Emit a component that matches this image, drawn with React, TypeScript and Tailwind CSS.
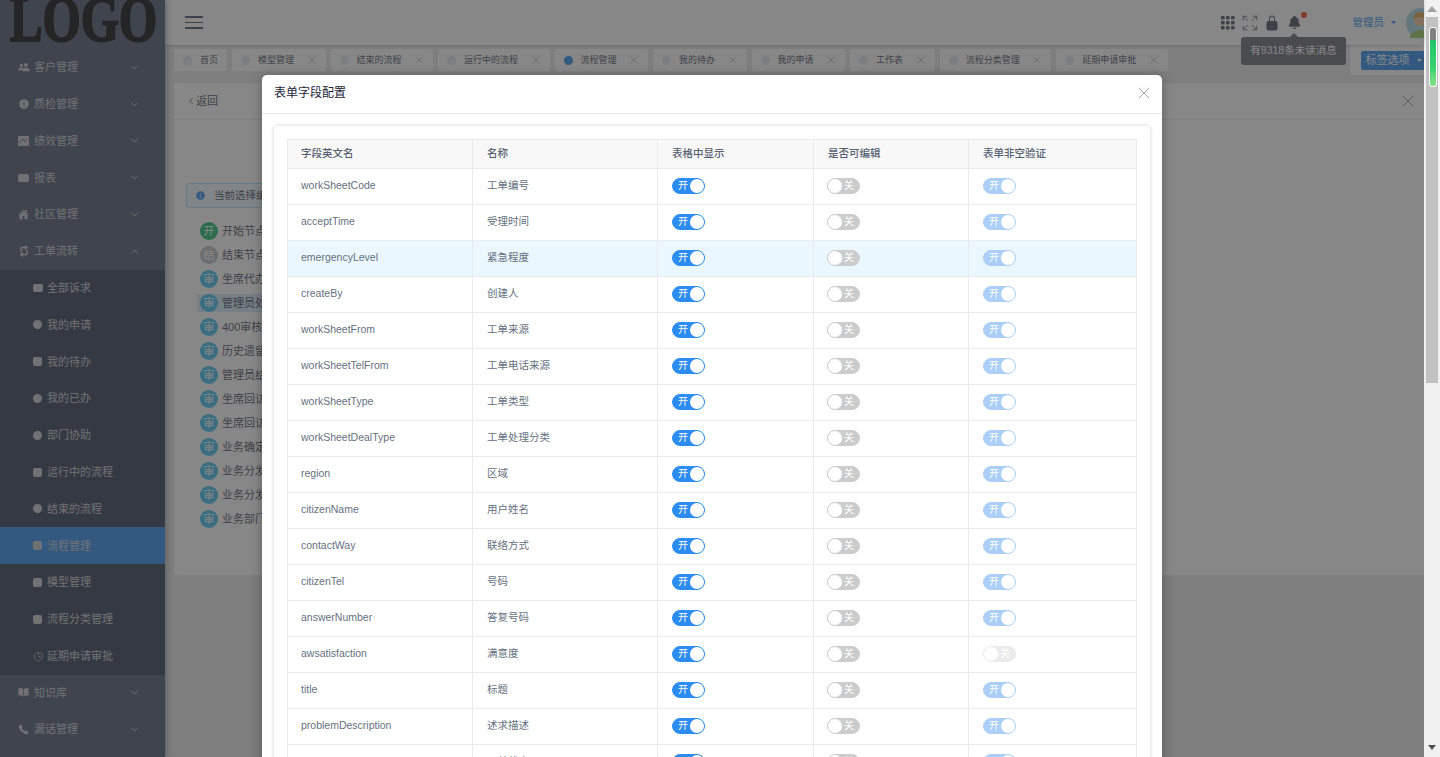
import React from 'react';
import { ChevronDown, ChevronUp, Expand, X, ChevronLeft, Repeat2 } from 'lucide-react';
import {
  IoPeople, IoAlertCircle, IoAnalytics, IoHome, IoBook, IoCall,
  IoLockClosed, IoNotifications, IoInformationCircle, IoTimeOutline, IoCaretDown,
} from 'react-icons/io5';

const topMenu = [
  { name: '客户管理', icon: <IoPeople size={12} /> },
  { name: '质检管理', icon: <IoAlertCircle size={12} /> },
  { name: '绩效管理', icon: <span className="flex h-[10px] w-[11px] items-center justify-center rounded-[1px] bg-[#c8c9ce] text-[#4e5870]"><IoAnalytics size={9} /></span> },
  { name: '报表', icon: <span className="block h-[8px] w-[11px] rounded-[2px] bg-[#c8c9ce]" /> },
  { name: '社区管理', icon: <IoHome size={11} /> },
];

const subMenu = [
  { name: '全部诉求', shape: 'wide' },
  { name: '我的申请', shape: 'round' },
  { name: '我的待办', shape: 'square' },
  { name: '我的已办', shape: 'round' },
  { name: '部门协助', shape: 'round' },
  { name: '运行中的流程', shape: 'square' },
  { name: '结束的流程', shape: 'round' },
  { name: '流程管理', shape: 'square', active: true },
  { name: '模型管理', shape: 'square' },
  { name: '流程分类管理', shape: 'square' },
  { name: '延期申请审批', shape: 'clock' },
];

const tabs = [
  { name: '首页', fixed: true },
  { name: '模型管理' },
  { name: '结束的流程' },
  { name: '运行中的流程' },
  { name: '流程管理', active: true },
  { name: '我的待办' },
  { name: '我的申请' },
  { name: '工作表' },
  { name: '流程分类管理' },
  { name: '延期申请审批' },
];

const nodes = [
  { mark: '开', name: '开始节点', color: 'bg-[#19be6b]' },
  { mark: '结', name: '结束节点', color: 'bg-[#bbbec4]' },
  { mark: '审', name: '坐席代办' },
  { mark: '审', name: '管理员处理', selected: true },
  { mark: '审', name: '400审核' },
  { mark: '审', name: '历史遗留' },
  { mark: '审', name: '管理员结案' },
  { mark: '审', name: '坐席回访' },
  { mark: '审', name: '坐席回访结案' },
  { mark: '审', name: '业务确定' },
  { mark: '审', name: '业务分发' },
  { mark: '审', name: '业务分发处理' },
  { mark: '审', name: '业务部门' },
];

const fields = [
  ['workSheetCode', '工单编号'],
  ['acceptTime', '受理时间'],
  ['emergencyLevel', '紧急程度'],
  ['createBy', '创建人'],
  ['workSheetFrom', '工单来源'],
  ['workSheetTelFrom', '工单电话来源'],
  ['workSheetType', '工单类型'],
  ['workSheetDealType', '工单处理分类'],
  ['region', '区域'],
  ['citizenName', '用户姓名'],
  ['contactWay', '联络方式'],
  ['citizenTel', '号码'],
  ['answerNumber', '答复号码'],
  ['awsatisfaction', '满意度'],
  ['title', '标题'],
  ['problemDescription', '述求描述'],
  ['workSheetStatus', '工单状态'],
];

const Switch = ({ kind }: { kind: 'on' | 'off' | 'lockedOn' | 'lockedOff' }) => {
  const isOn = kind === 'on' || kind === 'lockedOn';
  const bg = {
    on: 'bg-[#2d8cf0] border-[#2d8cf0]',
    off: 'bg-[#cccccc] border-[#cccccc]',
    lockedOn: 'bg-[#abcff7] border-[#abcff7]',
    lockedOff: 'bg-[#ebebeb] border-[#ebebeb]',
  }[kind];
  return (
    <span className={`relative block h-4 w-[33px] rounded-full border ${bg}`}>
      <span className={`absolute top-0 h-[14px] w-[14px] rounded-full bg-white ${isOn ? 'right-0' : 'left-0'}`} />
      <span className={`absolute top-0 text-[10px] leading-[14px] text-white ${isOn ? 'left-[5px]' : 'right-[5px]'}`}>
        {isOn ? '开' : '关'}
      </span>
    </span>
  );
};

const SubIcon = ({ shape }: { shape: string }) => {
  if (shape === 'clock') return <IoTimeOutline size={11} />;
  if (shape === 'round') return <span className="block h-[9px] w-[9px] rounded-full bg-[#c8c9ce]" />;
  if (shape === 'wide') return <span className="block h-[8px] w-[10px] rounded-[2px] bg-[#c8c9ce]" />;
  return <span className="block h-[9px] w-[9px] rounded-[2px] bg-[#c8c9ce]" />;
};

const Sidebar = () => (
  <aside className="z-10 flex h-full w-[165px] shrink-0 flex-col bg-[#4e5870] text-[11px] text-[#c8c9ce] shadow-[2px_0_6px_rgba(0,0,0,0.3)]">
    <div className="h-[49px] overflow-hidden">
      <div className="mt-[-14px] origin-left scale-x-[0.745] pl-[13px] font-['Liberation_Serif',serif] text-[66px] leading-none font-bold text-[#0a0a0a] [-webkit-text-stroke:2px_#0a0a0a]">
        LOGO
      </div>
    </div>
    {topMenu.map((item) => (
      <div key={item.name} className="flex h-[36.8px] items-center pr-[25px] pl-[18px]">
        <span className="flex w-4 items-center">{item.icon}</span>
        <span className="flex-1">{item.name}</span>
        <ChevronDown size={11} />
      </div>
    ))}
    <div className="flex h-[36.8px] items-center pr-[25px] pl-[18px]">
      <span className="flex w-4 items-center"><Repeat2 size={12} strokeWidth={3} className="rotate-90" /></span>
      <span className="flex-1">工单流转</span>
      <ChevronUp size={11} />
    </div>
    <div className="bg-[#343e55]">
      {subMenu.map((item) => (
        <div
          key={item.name}
          className={`flex h-[36.8px] items-center pl-[33px] ${item.active ? 'bg-[#2d8cf0]' : ''}`}
        >
          <span className="flex w-[14px] items-center"><SubIcon shape={item.shape} /></span>
          <span>{item.name}</span>
        </div>
      ))}
    </div>
    <div className="flex h-[36.8px] items-center pr-[25px] pl-[18px]">
      <span className="flex w-4 items-center"><IoBook size={11} /></span>
      <span className="flex-1">知识库</span>
      <ChevronDown size={11} />
    </div>
    <div className="flex h-[36.8px] items-center pr-[25px] pl-[18px]">
      <span className="flex w-4 items-center"><IoCall size={11} /></span>
      <span className="flex-1">漏话管理</span>
      <ChevronDown size={11} />
    </div>
  </aside>
);

const Header = () => (
  <header className="relative z-[5] flex h-[45px] shrink-0 items-center bg-white pr-0 pl-5 shadow-[0_1px_3px_rgba(0,0,0,0.2)]">
    <div className="flex w-[18px] flex-col gap-1">
      <span className="h-[1.5px] w-full bg-[#495060]" />
      <span className="h-[1.5px] w-full bg-[#495060]" />
      <span className="h-[1.5px] w-full bg-[#495060]" />
    </div>
    <div className="ml-auto flex items-center text-[#495060]">
      <svg width="14" height="14" viewBox="0 0 14 14" fill="currentColor">
        {[0, 5, 10].map((y) =>
          [0, 5, 10].map((x) => <rect key={`${x}-${y}`} x={x} y={y} width="3.6" height="3.6" rx="0.8" />),
        )}
      </svg>
      <Expand size={18} strokeWidth={1} className="ml-[6px]" />
      <IoLockClosed size={16} className="ml-[5px]" />
      <span className="relative ml-[7px] flex">
        <IoNotifications size={15} />
        <span className="absolute top-[-3px] right-[-5px] h-[6px] w-[6px] rounded-full bg-[#ed3f14]" />
      </span>
      <span className="ml-[51px] text-[10.5px] text-[#2d8cf0]">管理员</span>
      <IoCaretDown size={7} className="ml-[6px] text-[#2d8cf0]" />
      <svg width="18" height="30" viewBox="0 0 18 30" className="ml-[9px]">
        <circle cx="15" cy="15" r="15" fill="#a5d8e8" />
        <circle cx="14" cy="12" r="6" fill="#f5c89a" />
        <path d="M7 11 a7 7 0 0 1 14 0 q-7 -4 -14 0z" fill="#d9a441" />
        <path d="M4 27 q10 -10 20 0 v3 h-20z" fill="#9ccc65" />
      </svg>
    </div>
  </header>
);

const TabBar = () => (
  <div className="flex h-[30px] shrink-0 items-center pl-[9px]">
    <div className="flex flex-1 items-center gap-[5px]">
      {tabs.map((tab) => (
        <div
          key={tab.name}
          className={`flex h-[22px] items-center rounded-[2px] bg-white pl-[9px] text-[9px] text-[#495060] ${tab.fixed ? 'pr-[9px]' : 'pr-[8px]'}`}
        >
          <span className={`mr-2 h-[9px] w-[9px] rounded-full ${tab.active ? 'bg-[#2d8cf0]' : 'bg-[#e4e6e8]'}`} />
          <span className="mt-[2px]">{tab.name}</span>
          {!tab.fixed && <X size={12} strokeWidth={1} className="ml-[11.5px] text-[#80848f]" />}
        </div>
      ))}
    </div>
    <div className="flex h-full w-[74px] items-center bg-white pl-[11px]">
      <div className="flex h-[19px] flex-1 items-center justify-center gap-[6px] rounded-l-[2px] bg-[#2d8cf0] pl-[3px] text-[11px] text-white">
        标签选项
        <IoCaretDown size={7} />
      </div>
    </div>
  </div>
);

const ProcessCard = () => (
  <section className="mt-2 ml-[9px] flex h-[492px] flex-col rounded-l-[3px] bg-white text-[11px] text-[#495060]">
    <div className="flex h-[37px] shrink-0 items-center border-b border-[#e9eaec] pr-[6px] pl-[12px]">
      <ChevronLeft size={10} />
      <span>返回</span>
      <X size={20} strokeWidth={1} className="ml-auto text-[#80848f]" />
    </div>
    <div className="mt-[63px] ml-3 flex h-[25px] w-[400px] items-center rounded-[3px] border border-[#abdcff] bg-[#f0faff] pl-2">
      <IoInformationCircle size={11} className="text-[#2d8cf0]" />
      <span className="ml-2 text-[10.5px]">当前选择编辑节点</span>
    </div>
    <div className="mt-[14px] ml-[26px] flex flex-col items-start gap-[6px]">
      {nodes.map((node, i) => (
        <div
          key={i}
          className={`ml-[-3px] flex h-[18px] items-center gap-1 rounded-[2px] pr-1 pl-[3px] ${node.selected ? 'bg-[#d5e8fc]' : ''}`}
        >
          <span
            className={`flex h-[18px] w-[18px] items-center justify-center rounded-full text-[11px] text-white ${node.color ?? 'bg-[#3ec1f5]'}`}
          >
            {node.mark}
          </span>
          <span className="text-[11px]">{node.name}</span>
        </div>
      ))}
    </div>
  </section>
);

const FieldModal = () => (
  <div className="mx-auto mt-[75px] w-[900px] shrink-0 rounded-[5px] bg-white text-[10.5px] text-[#657180] shadow-[0_2px_12px_rgba(0,0,0,0.3)]">
    <div className="flex h-[39px] items-center justify-between border-b border-[#e9eaec] pr-2 pb-[2px] pl-3">
      <span className="text-[12px] text-[#1c2438]">表单字段配置</span>
      <X size={20} strokeWidth={1} className="text-[#999999]" />
    </div>
    <div className="px-3 pt-[12px]">
      <div className="rounded-[3px] bg-white p-[13px] shadow-[0_0_4px_rgba(0,0,0,0.2)]">
        <table className="w-[849px] table-fixed border-collapse border border-[#dddee1]">
          <colgroup>
            <col className="w-[185px]" />
            <col className="w-[185px]" />
            <col className="w-[156px]" />
            <col className="w-[155px]" />
            <col className="w-[168px]" />
          </colgroup>
          <thead>
            <tr className="h-[29px] bg-[#f8f8f9] text-left text-[#566070]">
              <th className="border border-[#e9eaec] pl-[13px] font-medium">字段英文名</th>
              <th className="border border-[#e9eaec] pl-[14px] font-medium">名称</th>
              <th className="border border-[#e9eaec] pl-[14px] font-medium">表格中显示</th>
              <th className="border border-[#e9eaec] pl-[14px] font-medium">是否可编辑</th>
              <th className="border border-[#e9eaec] pl-[14px] font-medium">表单非空验证</th>
            </tr>
          </thead>
          <tbody>
            {fields.map(([code, label]) => (
              <tr key={code} className={`h-[36px] ${code === 'emergencyLevel' ? 'bg-[#ebf7ff]' : ''}`}>
                <td className="border border-[#e9eaec] pb-[2px] pl-[13px]">{code}</td>
                <td className="border border-[#e9eaec] pb-[2px] pl-[14px]">{label}</td>
                <td className="border border-[#e9eaec] pb-[2px] pl-[14px]"><Switch kind="on" /></td>
                <td className="border border-[#e9eaec] pb-[2px] pl-[13px]"><Switch kind="off" /></td>
                <td className="border border-[#e9eaec] pb-[2px] pl-[14px]">
                  <Switch kind={code === 'awsatisfaction' ? 'lockedOff' : 'lockedOn'} />
                </td>
              </tr>
            ))}
          </tbody>
        </table>
      </div>
    </div>
  </div>
);

const PageScrollbar = () => (
  <div className="relative flex h-full w-4 shrink-0 flex-col items-center bg-[#f1f1f1]">
    <svg width="10" height="6" viewBox="0 0 10 6" className="mt-[6px] shrink-0">
      <path d="M5 0 L10 6 H0z" fill="#a3a3a3" />
    </svg>
    <div className="mt-[5px] h-[366px] w-3 shrink-0 bg-[#c1c1c1]" />
    <svg width="8" height="5" viewBox="0 0 8 5" className="mt-auto mb-[7px] shrink-0">
      <path d="M0 0 H8 L4 5z" fill="#505050" />
    </svg>
    <div className="absolute top-[27px] left-[5px] h-[60px] w-[8px] rounded-[3px] border border-white bg-[linear-gradient(#808080_0,#808080_20%,#1fc668_22%,#3ad26f_70%,#8be38a_100%)]" />
  </div>
);

const App: React.FC = () => (
  <div className="flex h-[757px] w-[1440px] overflow-hidden font-['Liberation_Sans','Noto_Sans_CJK_SC',sans-serif]">
    <div className="relative flex h-full w-[1424px] shrink-0">
      <Sidebar />
      <main className="flex min-w-0 flex-1 flex-col bg-[#e8e8e8]">
        <Header />
        <TabBar />
        <ProcessCard />
      </main>
      {/* message tooltip sits over the tab bar */}
      <div className="absolute top-[37px] left-[1241px] z-20 flex h-[28px] w-[105px] items-center justify-center rounded-[3px] bg-[#666a72] text-[10.5px] text-white">
        <span className="absolute top-[-4px] left-[49px] h-0 w-0 border-x-[4px] border-b-[4px] border-x-transparent border-b-[#666a72]" />
        有9318条未读消息
      </div>
      <div className="absolute inset-0 z-30 flex flex-col overflow-hidden bg-[rgba(55,55,55,0.6)]">
        <FieldModal />
      </div>
    </div>
    <PageScrollbar />
  </div>
);

export default App;
